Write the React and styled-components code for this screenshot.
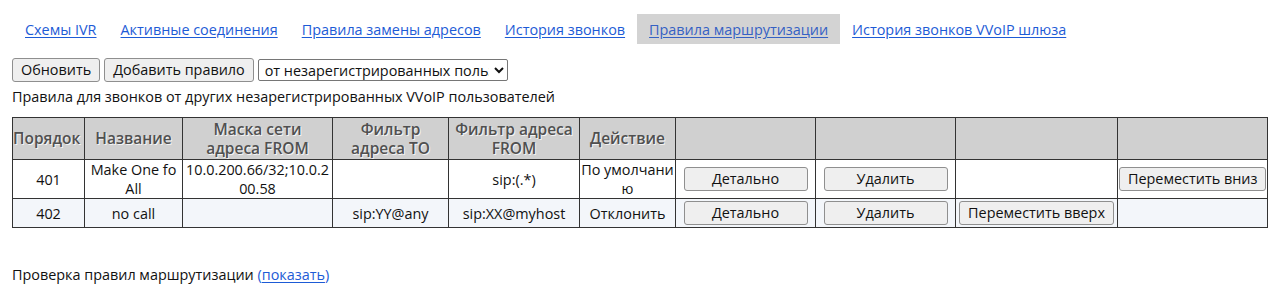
import React from "react";
import styled, { createGlobalStyle } from "styled-components";

const GlobalStyle = createGlobalStyle`
  html, body {
    margin: 0;
    padding: 0;
    background: #ffffff;
  }
  body {
    font-family: "Open Sans", "Noto Sans", sans-serif;
    font-size: 14.4px;
    color: #111;
  }
`;

const Page = styled.div`
  padding: 14px 13px 0 12px;
`;

const TabBar = styled.nav`
  display: flex;
  align-items: stretch;
  padding-left: 1px;
`;

const Tab = styled.a`
  display: block;
  height: 30px;
  line-height: 31px;
  padding: 0 12px;
  font-size: 14.4px;
  color: ${({ $active }) => ($active ? "#3561c4" : "#1d5bd6")};
  background: ${({ $active }) => ($active ? "#d3d3d3" : "transparent")};
  text-decoration: underline;
  text-underline-offset: 2px;
  cursor: pointer;
`;

const Toolbar = styled.div`
  display: flex;
  align-items: center;
  gap: 4px;
  margin-top: 14px;
  height: 24px;
`;

const Button = styled.button`
  height: 24px;
  width: ${({ $w }) => ($w ? `${$w}px` : "auto")};
  padding: 0 8px;
  font-family: inherit;
  font-size: 14.4px;
  line-height: 20px;
  color: #111;
  background: #efefef;
  border: 1px solid #8f8f8f;
  border-radius: 3px;
  white-space: nowrap;
`;

const Select = styled.select`
  width: 250px;
  height: 22px;
  font-family: inherit;
  font-size: 14.4px;
  color: #111;
  background: #fff;
  border: 1px solid #767676;
  border-radius: 2px;
  padding: 0 2px;
`;

const Note = styled.div`
  margin-top: 5px;
  line-height: 20px;
`;

const Table = styled.table`
  margin-top: 10px;
  width: 100%;
  border-collapse: collapse;
  table-layout: fixed;
  border: 1px solid #333;
`;

const Th = styled.th`
  background: #d0d0d0;
  border: 1px solid #333;
  height: 41px;
  padding: ${({ $tight }) => ($tight ? "0" : "0 4px")};
  font-size: 15.5px;
  font-weight: 600;
  line-height: 19px;
  color: #505050;
  text-shadow: 1px 1px 0 #f4f4f4;
  text-align: ${({ $tight }) => ($tight ? "left" : "center")};
  vertical-align: middle;
  white-space: ${({ $tight }) => ($tight ? "nowrap" : "normal")};
`;

const Row = styled.tr`
  background: ${({ $alt }) => ($alt ? "#f3f6fa" : "#ffffff")};
`;

const Td = styled.td`
  border: 1px solid #333;
  height: ${({ $h }) => $h}px;
  padding: 0 1px;
  text-align: center;
  vertical-align: middle;
  line-height: 19px;
  word-break: break-all;
`;

const Footer = styled.div`
  margin-top: 37px;
  line-height: 20px;
`;

const Paren = styled.span`
  color: #1d5bd6;
`;

const Link = styled.a`
  color: #1d5bd6;
  text-decoration: underline;
  text-underline-offset: 2px;
`;

const tabs = [
  "Схемы IVR",
  "Активные соединения",
  "Правила замены адресов",
  "История звонков",
  "Правила маршрутизации",
  "История звонков VVoIP шлюза",
];

const widths = [72, 98, 150, 116, 131, 96, 140, 140, 162, 150];

const rows = [
  {
    order: "401",
    name: "Make One fo All",
    mask: "10.0.200.66/32;10.0.200.58",
    to: "",
    from: "sip:(.*)",
    action: "По умолчанию",
    up: false,
    down: true,
    h: 38,
  },
  {
    order: "402",
    name: "no call",
    mask: "",
    to: "sip:YY@any",
    from: "sip:XX@myhost",
    action: "Отклонить",
    up: true,
    down: false,
    h: 28,
  },
];

export default function App() {
  return (
    <Page>
      <GlobalStyle />
      <TabBar>
        {tabs.map((t, i) => (
          <Tab key={t} $active={i === 4}>
            {t}
          </Tab>
        ))}
      </TabBar>
      <Toolbar>
        <Button>Обновить</Button>
        <Button>Добавить правило</Button>
        <Select defaultValue="unreg">
          <option value="unreg">от незарегистрированных пользователей</option>
        </Select>
      </Toolbar>
      <Note>Правила для звонков от других незарегистрированных VVoIP пользователей</Note>
      <Table>
        <colgroup>
          {widths.map((w, i) => (
            <col key={i} style={{ width: w }} />
          ))}
        </colgroup>
        <thead>
          <tr>
            <Th $tight>Порядок</Th>
            <Th>Название</Th>
            <Th>Маска сети адреса FROM</Th>
            <Th>Фильтр адреса TO</Th>
            <Th>Фильтр адреса FROM</Th>
            <Th>Действие</Th>
            <Th />
            <Th />
            <Th />
            <Th />
          </tr>
        </thead>
        <tbody>
          {rows.map((r, i) => (
            <Row key={r.order} $alt={i % 2 === 1}>
              <Td $h={r.h}>{r.order}</Td>
              <Td $h={r.h}>{r.name}</Td>
              <Td $h={r.h}>{r.mask}</Td>
              <Td $h={r.h}>{r.to}</Td>
              <Td $h={r.h}>{r.from}</Td>
              <Td $h={r.h}>{r.action}</Td>
              <Td $h={r.h}>
                <Button $w={124}>Детально</Button>
              </Td>
              <Td $h={r.h}>
                <Button $w={124}>Удалить</Button>
              </Td>
              <Td $h={r.h}>{r.up && <Button>Переместить вверх</Button>}</Td>
              <Td $h={r.h}>{r.down && <Button>Переместить вниз</Button>}</Td>
            </Row>
          ))}
        </tbody>
      </Table>
      <Footer>
        Проверка правил маршрутизации{" "}
        <Paren>
          (<Link>показать</Link>)
        </Paren>
      </Footer>
    </Page>
  );
}
